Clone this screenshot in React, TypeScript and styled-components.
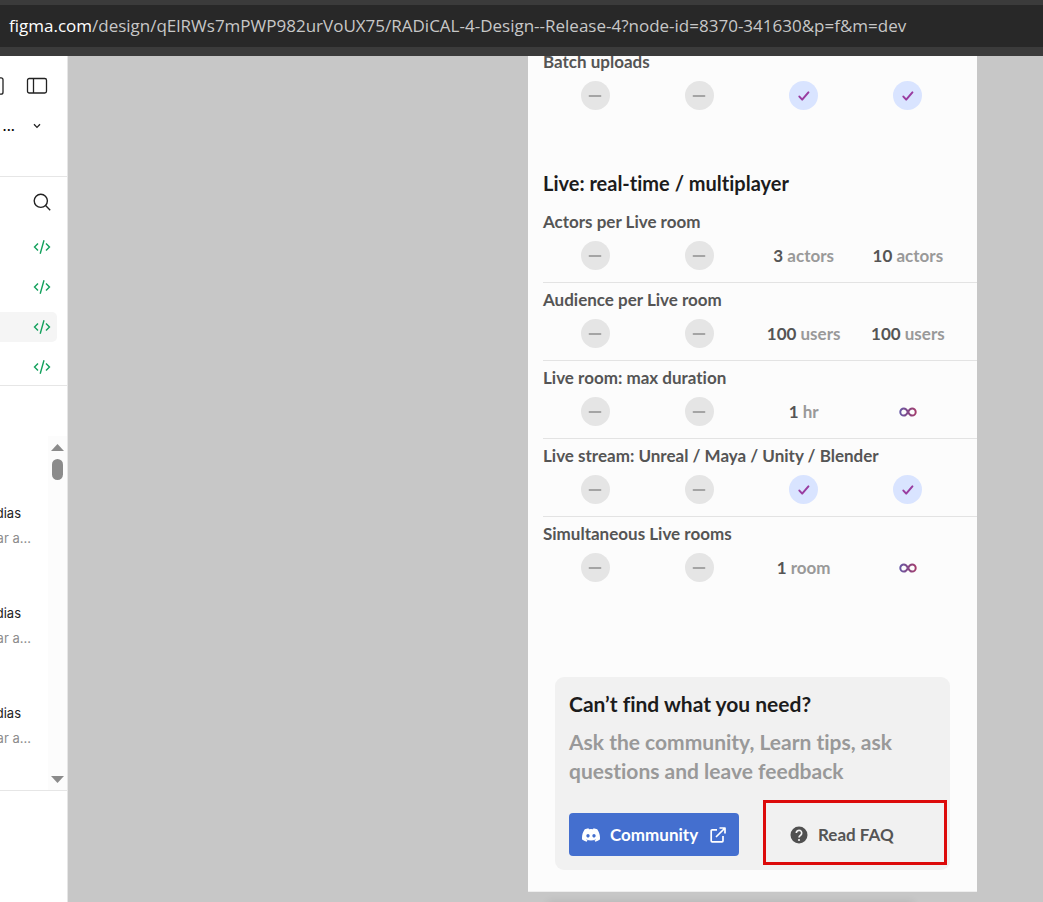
import React from "react";
import styled, { createGlobalStyle } from "styled-components";

const GlobalStyle = createGlobalStyle`
  * { box-sizing: border-box; }
  body { margin: 0; background: #c7c7c7; }
  button { font: inherit; border: 0; padding: 0; background: none; cursor: pointer; }
  h2, h3, p, ul { margin: 0; padding: 0; }
  svg { display: block; flex: none; }
`;

const Page = styled.div`
  display: flex;
  flex-direction: column;
  height: 100vh;
  overflow: hidden;
`;

const AddressBar = styled.header`
  flex: none;
  padding: 5px 0 9px;
  background: #3b3b3b;
`;

const Address = styled.div`
  padding: 0 9px;
  background: #282828;
  color: #c7c7c7;
  font: 17px/42px "Open Sans", "Noto Sans", sans-serif;
  white-space: nowrap;
`;

const Host = styled.span`
  color: #ffffff;
`;

const Workspace = styled.div`
  flex: 1;
  display: flex;
  min-height: 0;
`;

const Sidebar = styled.aside`
  flex: none;
  display: flex;
  flex-direction: column;
  width: 68px;
  overflow: hidden;
  background: #ffffff;
  border-right: 1px solid #e6e6e6;
  font-family: Inter, sans-serif;
  font-size: 13px;
`;

const FileHeader = styled.div`
  height: 121px;
  padding: 10px 19px 0 0;
  border-bottom: 1px solid #e6e6e6;
`;

const HeaderLine = styled.div`
  display: flex;
  align-items: center;
  justify-content: flex-end;
  gap: 22px;
  height: 40px;
`;

const FileName = styled.button`
  display: flex;
  align-items: center;
  gap: 18px;
  padding-right: 7px;
  color: #000000;
  font-weight: 600;
`;

const Pages = styled.nav`
  height: 209px;
  padding-top: 5px;
  border-bottom: 1px solid #e6e6e6;
`;

const PageLine = styled.div`
  display: flex;
  align-items: center;
  height: 40px;
  padding-right: 10px;

  &:first-child { margin-bottom: 5px; }
`;

const PageButton = styled.button<{ $active?: boolean }>`
  display: flex;
  align-items: center;
  justify-content: flex-end;
  width: 100%;
  height: 30px;
  padding-right: 6px;
  border-radius: 0 5px 5px 0;
  background: ${(p) => (p.$active ? "#f5f5f5" : "transparent")};
`;

const Layers = styled.div`
  display: flex;
  justify-content: flex-end;
  height: 405px;
  padding-top: 50px;
  border-bottom: 1px solid #e6e6e6;
`;

const LayerList = styled.ul`
  flex: 1;
  min-width: 0;
  list-style: none;
  padding-top: 65px;
`;

const Layer = styled.li`
  display: flex;
  flex-direction: column;
  align-items: flex-end;
  height: 100px;
  line-height: 25px;
  white-space: nowrap;
`;

const LayerName = styled.span`
  padding-right: 27px;
  color: #1e1e1e;
`;

const LayerNote = styled.span`
  padding-right: 17px;
  color: #8c8c8c;
`;

const ScrollTrack = styled.div`
  flex: none;
  display: flex;
  flex-direction: column;
  align-items: center;
  gap: 8px;
  width: 19px;
  padding: 8px 0 7px;
  background: #fcfcfc;
`;

const ScrollThumb = styled.div`
  flex: none;
  width: 11px;
  height: 21px;
  margin-bottom: auto;
  border-radius: 6px;
  background: #8b8b8b;
`;

const Canvas = styled.main`
  position: relative;
  flex: 1;
  min-width: 0;
  padding: 0 66px 0 460px;
  overflow: hidden;

  &::after {
    content: "";
    position: absolute;
    top: 100%;
    left: 480px;
    right: 130px;
    height: 40px;
    box-shadow: 0 0 8px rgba(0, 0, 0, 0.1);
  }
`;

const Frame = styled.article`
  margin-top: -11px;
  padding: 0 0 21px 15px;
  background: #fcfcfc;
  border-bottom: 1px solid #eeeeee;
  color: #555555;
  font-family: Lato, sans-serif;
  font-weight: 700;
  font-variant-ligatures: none;
`;

const SectionTitle = styled.h2`
  margin: 49px 0 10px;
  color: #1c1c1c;
  font-size: 20px;
  line-height: 24px;
`;

const PlanTable = styled.table`
  width: 100%;
  table-layout: fixed;
  border-collapse: separate;
  border-spacing: 0;
  font-size: 17px;
  line-height: 20px;
`;

const Gutter = styled.col`
  width: 17px;
`;

const FeatureName = styled.th<{ $divided: boolean }>`
  padding: 7px 0 9px;
  border-top: ${(p) => (p.$divided ? "1px solid #e3e3e3" : "0")};
  text-align: left;
`;

const Value = styled.td`
  height: 41px;
  padding: 0 0 12px;
  vertical-align: middle;
  text-align: center;
  white-space: nowrap;

  svg { margin: 0 auto; }
`;

const Unit = styled.span`
  color: #999999;
`;

const Badge = styled.span<{ $included?: boolean }>`
  display: flex;
  align-items: center;
  justify-content: center;
  width: 29px;
  height: 29px;
  margin: 0 auto;
  border-radius: 50%;
  background: ${(p) => (p.$included ? "#d9e4ff" : "#e5e5e5")};
`;

const HelpCard = styled.section`
  margin: 83px 27px 0 12px;
  padding: 14px;
  border-radius: 9px;
  background: #f1f1f1;
`;

const HelpTitle = styled.h3`
  color: #1c1c1c;
  font-size: 21px;
  line-height: 26px;
`;

const HelpText = styled.p`
  margin: 10px 0 28px;
  color: #999999;
  font-size: 21px;
  line-height: 29px;
`;

const Actions = styled.div`
  display: grid;
  grid-template-columns: 170px 1fr;
  gap: 38px;
`;

const ActionLink = styled.a<{ $primary?: boolean }>`
  position: relative;
  display: flex;
  align-items: center;
  gap: 10px;
  height: 43px;
  padding: 0 13px;
  border-radius: 4px;
  background: ${(p) => (p.$primary ? "#446fcf" : "transparent")};
  color: ${(p) => (p.$primary ? "#ffffff" : "#555555")};
  font-size: 17px;
  line-height: 20px;
  text-decoration: none;
  white-space: nowrap;

  svg:last-child:not(:first-child) { margin-left: auto; }
`;

const Highlight = styled.span`
  position: absolute;
  inset: -13px -11px -9px -14px;
  border: 3px solid #dc0a0a;
`;

const PanelIcon = () => (
  <svg width="22" height="18" viewBox="0 0 22 18" fill="none" stroke="#222" strokeWidth="1.3">
    <rect x="1.5" y="1.5" width="19" height="14.5" rx="1.8" />
    <path d="M7.5 1.5V16" />
  </svg>
);

const CutPanelIcon = () => (
  <svg width="22" height="18" viewBox="0 0 22 18" fill="none" stroke="#222" strokeWidth="1.3">
    <rect x="1" y="0.8" width="20" height="16.4" rx="2" />
  </svg>
);

const ChevronIcon = () => (
  <svg width="8" height="6" viewBox="0 0 8 6" fill="none" stroke="#222" strokeWidth="1.3">
    <path d="M1 1.2 4 4.4 7 1.2" />
  </svg>
);

const SearchIcon = () => (
  <svg width="18" height="18" viewBox="0 0 18 18" fill="none" stroke="#222" strokeWidth="1.4">
    <circle cx="7.8" cy="7.8" r="6.6" />
    <path d="m12.6 12.6 4.6 4.6" />
  </svg>
);

const CodeIcon = () => (
  <svg width="18" height="16" viewBox="0 0 18 16" fill="none" stroke="#12a15c" strokeWidth="1.4">
    <path d="M5 4.4 1.5 8 5 11.6M13 4.4 16.5 8 13 11.6M11 1.2 7.2 14.8" />
  </svg>
);

const ArrowIcon = ({ down }: { down?: boolean }) => (
  <svg width="13" height="7" viewBox="0 0 13 7" fill="#8b8b8b">
    <path d={down ? "M0 0h13L6.5 7z" : "M0 7h13L6.5 0z"} />
  </svg>
);

const DashIcon = () => (
  <svg width="14" height="4" viewBox="0 0 14 4">
    <path d="M1.5 2h11" stroke="#a4a4a4" strokeWidth="1.8" strokeLinecap="round" />
  </svg>
);

const CheckIcon = () => (
  <svg width="12" height="10" viewBox="0 0 12 10" fill="none" stroke="#993ca0" strokeWidth="2" strokeLinecap="round" strokeLinejoin="round">
    <path d="m1.4 5.6 2.8 3 6.2-7.2" />
  </svg>
);

const InfinityIcon = ({ id }: { id: string }) => (
  <svg width="18" height="10" viewBox="0 0 18 10" fill="none" role="img" aria-label="Unlimited">
    <defs>
      <linearGradient id={id} x1="0" y1="0" x2="18" y2="0" gradientUnits="userSpaceOnUse">
        <stop stopColor="#6358a6" />
        <stop offset="1" stopColor="#a63a68" />
      </linearGradient>
    </defs>
    <path
      d="M9 5C7.8 2.6 6.8 1.4 4.9 1.4a3.6 3.6 0 0 0 0 7.2C6.8 8.6 7.8 7.4 9 5s2.2-3.6 4.1-3.6a3.6 3.6 0 0 1 0 7.2C11.2 8.6 10.2 7.4 9 5Z"
      stroke={`url(#${id})`}
      strokeWidth="2"
    />
  </svg>
);

const DiscordIcon = () => (
  <svg width="18" height="18" viewBox="0 0 24 24" fill="#fff">
    <path d="M20.3 4.4A19.8 19.8 0 0 0 15.4 2.9c-.2.4-.5.9-.6 1.3a18.3 18.3 0 0 0-5.5 0A12.6 12.6 0 0 0 8.6 2.9 19.7 19.7 0 0 0 3.7 4.4C.5 9-.3 13.6.1 18.1a19.9 19.9 0 0 0 6 3c.5-.6.9-1.3 1.3-2a12.9 12.9 0 0 1-1.9-.9l.4-.3a14.2 14.2 0 0 0 12.2 0l.4.3c-.6.4-1.2.7-1.9.9.4.7.8 1.4 1.3 2a19.8 19.8 0 0 0 6-3c.5-5.2-.8-9.7-3.6-13.7ZM8 15.3c-1.2 0-2.2-1.1-2.2-2.4S6.8 10.5 8 10.5s2.2 1.1 2.2 2.4S9.2 15.3 8 15.3Zm8 0c-1.2 0-2.2-1.1-2.2-2.4s1-2.4 2.2-2.4 2.2 1.1 2.2 2.4-1 2.4-2.2 2.4Z" />
  </svg>
);

const ExternalIcon = () => (
  <svg width="16" height="16" viewBox="0 0 16 16" fill="none" stroke="#fff" strokeWidth="1.7" strokeLinejoin="round">
    <path d="M7 2.9H2.2a1 1 0 0 0-1 1v9.9a1 1 0 0 0 1 1H12a1 1 0 0 0 1-1V9M9.5 1H15v5.5M15 1 6 10" />
  </svg>
);

const HelpIcon = () => (
  <svg width="18" height="18" viewBox="0 0 18 18" fill="none">
    <circle cx="9" cy="9" r="8.5" fill="#505050" />
    <path d="M6.3 7.1a2.7 2.7 0 1 1 4.3 2.1C9.6 9.9 9 10.3 9 11.5" stroke="#f1f1f1" strokeWidth="1.7" />
    <circle cx="9" cy="14" r="1.1" fill="#f1f1f1" />
  </svg>
);

type Cell = "none" | "yes" | "unlimited" | [string, string];
type Feature = { name: string; cells: Cell[] };

const uploads: Feature[] = [{ name: "Batch uploads", cells: ["none", "none", "yes", "yes"] }];

const live: Feature[] = [
  { name: "Actors per Live room", cells: ["none", "none", ["3", "actors"], ["10", "actors"]] },
  { name: "Audience per Live room", cells: ["none", "none", ["100", "users"], ["100", "users"]] },
  { name: "Live room: max duration", cells: ["none", "none", ["1", "hr"], "unlimited"] },
  { name: "Live stream: Unreal / Maya / Unity / Blender", cells: ["none", "none", "yes", "yes"] },
  { name: "Simultaneous Live rooms", cells: ["none", "none", ["1", "room"], "unlimited"] },
];

function CellContent({ cell, id }: { cell: Cell; id: string }) {
  if (cell === "none") return <Badge role="img" aria-label="Not included"><DashIcon /></Badge>;
  if (cell === "yes") return <Badge $included role="img" aria-label="Included"><CheckIcon /></Badge>;
  if (cell === "unlimited") return <InfinityIcon id={id} />;
  return <>{cell[0]} <Unit>{cell[1]}</Unit></>;
}

function Features({ rows }: { rows: Feature[] }) {
  return (
    <PlanTable>
      <colgroup>
        <col /><col /><col /><col /><Gutter />
      </colgroup>
      {rows.map((row, r) => (
        <tbody key={row.name}>
          <tr>
            <FeatureName colSpan={5} scope="rowgroup" $divided={r > 0}>{row.name}</FeatureName>
          </tr>
          <tr>
            {row.cells.map((cell, c) => (
              <Value key={c}><CellContent cell={cell} id={`unlimited-${r}-${c}`} /></Value>
            ))}
          </tr>
        </tbody>
      ))}
    </PlanTable>
  );
}

export default function App() {
  return (
    <Page>
      <GlobalStyle />
      <AddressBar>
        <Address>
          <Host>figma.com</Host>/design/qElRWs7mPWP982urVoUX75/RADiCAL-4-Design--Release-4?node-id=8370-341630&amp;p=f&amp;m=dev
        </Address>
      </AddressBar>
      <Workspace>
        <Sidebar>
          <FileHeader>
            <HeaderLine>
              <CutPanelIcon />
              <button aria-label="Toggle sidebar"><PanelIcon /></button>
            </HeaderLine>
            <HeaderLine>
              <FileName aria-label="File menu">...<ChevronIcon /></FileName>
            </HeaderLine>
          </FileHeader>
          <Pages>
            <PageLine><PageButton aria-label="Search"><SearchIcon /></PageButton></PageLine>
            {[0, 1, 2, 3].map((n) => (
              <PageLine key={n}>
                <PageButton $active={n === 2} aria-label={`Page ${n + 1}`}><CodeIcon /></PageButton>
              </PageLine>
            ))}
          </Pages>
          <Layers>
            <LayerList>
              {[0, 1, 2].map((n) => (
                <Layer key={n}>
                  <LayerName>dias</LayerName>
                  <LayerNote>ar a...</LayerNote>
                </Layer>
              ))}
            </LayerList>
            <ScrollTrack>
              <ArrowIcon />
              <ScrollThumb />
              <ArrowIcon down />
            </ScrollTrack>
          </Layers>
        </Sidebar>
        <Canvas>
          <Frame>
            <Features rows={uploads} />
            <SectionTitle>Live: real-time / multiplayer</SectionTitle>
            <Features rows={live} />
            <HelpCard>
              <HelpTitle>Can’t find what you need?</HelpTitle>
              <HelpText>Ask the community, Learn tips, ask questions and leave feedback</HelpText>
              <Actions>
                <ActionLink $primary href="#community"><DiscordIcon />Community<ExternalIcon /></ActionLink>
                <ActionLink href="#faq"><HelpIcon />Read FAQ<Highlight /></ActionLink>
              </Actions>
            </HelpCard>
          </Frame>
        </Canvas>
      </Workspace>
    </Page>
  );
}
